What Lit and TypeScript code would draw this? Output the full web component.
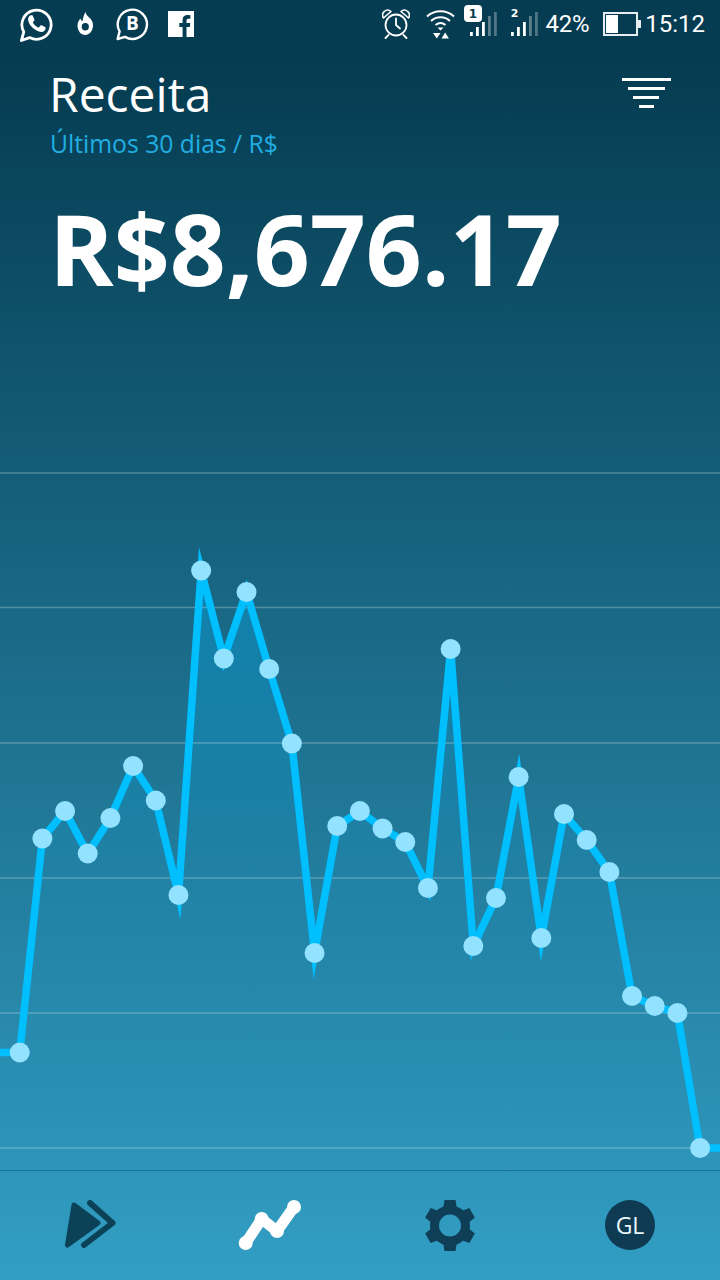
import { LitElement, html, css, svg } from 'lit';
import { customElement } from 'lit/decorators.js';

// chart y values are page coordinates, the svg has a matching viewBox
const VALUES = [
  1052.5, 838.5, 811, 853.5, 818, 766, 800.5, 895, 570.5, 658.5, 592, 669, 743.5, 953, 826, 811,
  828.5, 842, 888, 649, 946, 898, 777, 938, 814, 840, 872, 996, 1006, 1013, 1148,
];
const POINTS = VALUES.map((y, i): [number, number] => [19.7 + 22.68 * i, y]);
const GRID = [473, 607.5, 743, 878, 1013, 1148];

@customElement('app-root')
export class AppRoot extends LitElement {
  static styles = css`
    :host {
      display: block;
    }
    .page {
      width: 720px;
      height: 1280px;
      display: flex;
      flex-direction: column;
      background: linear-gradient(180deg, #053c51 0%, #053c51 5%, #329ec4 100%);
      color: #fff;
      font-family: 'Open Sans', sans-serif;
      overflow: hidden;
    }
    .status {
      height: 48px;
      flex: none;
      display: flex;
      align-items: center;
      justify-content: space-between;
      padding: 0 15px 0 20px;
      font-family: Roboto, sans-serif;
      font-size: 24px;
    }
    .left,
    .right {
      display: flex;
      align-items: center;
    }
    svg {
      display: block;
    }
    .flame { margin-left: 24px; }
    .biz { margin-left: 22px; }
    .fb { margin-left: 19px; }
    .wifi { margin-left: 16px; }
    .sim1 { margin-left: 9px; margin-top: -2px; }
    .sim2 { margin-left: 13px; margin-top: -2px; }
    .pct { margin-left: 7px; letter-spacing: -0.3px; }
    .batt { margin-left: 14px; }
    .time { margin-left: 4px; }
    .head {
      flex: none;
      height: 110px;
      display: flex;
      justify-content: space-between;
      padding: 15px 49px 0 50px;
      box-sizing: border-box;
    }
    h1 {
      margin: 0 0 0 -1px;
      font-size: 48px;
      line-height: 62px;
      font-weight: 400;
    }
    .sub {
      font-size: 24.7px;
      line-height: 34px;
      margin-top: 2px;
      color: #20aee2;
    }
    .filter {
      margin-top: 15px;
    }
    .amount {
      flex: none;
      height: 282px;
      padding-left: 49px;
      font-size: 98px;
      line-height: 180px;
      font-weight: 700;
    }
    .chart {
      flex: 1;
      min-height: 0;
    }
    nav {
      flex: none;
      height: 110px;
      border-top: 1px solid #1a7293;
      display: grid;
      grid-template-columns: repeat(4, 1fr);
      justify-items: center;
      padding-top: 29px;
      box-sizing: border-box;
    }
    .avatar {
      width: 50px;
      height: 50px;
      border-radius: 50%;
      background: #0e3b52;
      display: flex;
      align-items: center;
      justify-content: center;
      font-size: 23px;
      color: #e8f6fb;
    }
  `;

  private signal(cls: string, width: number, offset: number, badge: boolean) {
    const bars = [[0, 4, 1], [6, 9, 1], [12, 14, 1], [18, 20, 0.35], [24, 24, 0.3]];
    return html`<svg class=${cls} width=${width} height="36" viewBox="0 0 ${width} 36">
      ${badge
        ? svg`<rect x="0" y="0" width="18" height="17" rx="4" fill="#fff"/>
            <text x="9" y="13" text-anchor="middle" font-family="DejaVu Sans" font-weight="700" font-size="12" fill="#053c51">1</text>`
        : svg`<text x="4.5" y="12" text-anchor="middle" font-family="DejaVu Sans" font-weight="700" font-size="11" fill="#fff">2</text>`}
      ${bars.map(
        ([x, h, o]) => svg`<rect x=${x + offset} y=${31 - h} width="2.8" height=${h} fill="#fff" opacity=${o}/>`,
      )}
    </svg>`;
  }

  private renderStatus() {
    return html`<div class="status">
      <div class="left">
        <svg width="33" height="36" viewBox="0 0 33 36" fill="none" stroke="#fff" stroke-width="2.8">
          <path d="M1.4 34.5l2.4-8.6A14.6 14.6 0 1 1 9.6 31.6z" stroke-linejoin="round"/>
          <path fill="#fff" stroke="none" d="M11.6 9.2c.5 0 1 0 1.3.7l1.5 3.5c.2.4.1.8-.1 1.1l-1.2 1.5c-.3.3-.3.7 0 1.1 1.2 2 2.8 3.4 4.9 4.4.4.2.8.1 1-.2l1.5-1.8c.3-.4.7-.4 1.1-.2l3.4 1.6c.5.3.6.5.6 1 0 2.500-2.200 4.100-4.500 4-5.900-.6-12.400-6.400-13-12.200-.1-1.800.9-3.800 2.500-4.500.3 0 .6 0 1 0z"/>
        </svg>
        <svg class="flame" width="17" height="24" viewBox="0 0 17 24">
          <path fill="#fff" fill-rule="evenodd" d="M8.500 0c.6 2.500 1.700 3.600 3.200 5 2.300 2 4.300 4.300 4.300 8.300 0 5.400-3.500 9.700-7.800 9.700S.5 18.800.5 13.500C.5 10.500 2 8 3.500 6.500c.3 1.400 1 2.200 2 2.500C6 6 6.800 3 8.500 0zM8.300 11a3.600 3.700 0 1 0 0 7.400 3.600 3.700 0 0 0 0-7.400z"/>
        </svg>
        <svg class="biz" width="33" height="34" viewBox="0 0 33 34" fill="none" stroke="#fff" stroke-width="2.400">
          <path d="M1.600 32l2-7.600A14.600 14.600 0 1 1 9 29.900z" stroke-linejoin="round"/>
          <text x="16.500" y="23" text-anchor="middle" fill="#fff" stroke="none" font-family="Open Sans" font-weight="700" font-size="19">B</text>
        </svg>
        <svg class="fb" width="26" height="26" viewBox="0 0 26 26">
          <path fill="#fff" d="M0 0h26v26h-7.500v-10h3.300l.5-3.900h-3.800V9.700c0-1.100.3-1.900 1.900-1.900h2V4.300c-.4 0-1.600-.2-2.900-.2-2.900 0-4.900 1.800-4.900 5v3h-3.300V16h3.300v10H0z"/>
        </svg>
      </div>
      <div class="right">
        <svg width="28" height="30" viewBox="0 0 28 30" fill="none" stroke="#fff" stroke-width="1.800">
          <circle cx="14" cy="16" r="10.500"/>
          <path d="M14 9.500V16l4 3.500M6.500 26l-3 3M21.500 26l3 3" stroke-linecap="round"/>
          <path d="M1.500 9A5 5 0 0 1 9 2.500zM26.500 9A5 5 0 0 0 19 2.500z" stroke-width="1.600" stroke-linejoin="round"/>
        </svg>
        <svg class="wifi" width="29" height="30" viewBox="0 0 29 30" fill="none" stroke="#fff" stroke-width="2">
          <path d="M1 7.500C8.500 .5 20.500 .5 28 7.500M5 12c5.500-5 13.500-5 19 0M9.500 16c3-2.500 7-2.500 10 0"/>
          <path fill="#fff" stroke="none" d="M11.500 18.500h6l-3 3zM7 24h7.500l-3.700 5.500zM15.500 29.500l3.700-6 3.700 6z"/>
        </svg>
        ${this.signal('sim1', 33, 6, true)} ${this.signal('sim2', 29, 1, false)}
        <span class="pct">42%</span>
        <svg class="batt" width="38" height="24" viewBox="0 0 38 24">
          <rect x="1" y="1" width="33" height="22" fill="none" stroke="#e6eef1" stroke-width="2"/>
          <rect x="3" y="3" width="12" height="18" fill="#fff"/>
          <rect x="35" y="8" width="3" height="8" fill="#e6eef1"/>
        </svg>
        <span class="time">15:12</span>
      </div>
    </div>`;
  }

  private renderChart() {
    const line = POINTS.map(([x, y]) => `${x},${y}`).join(' ');
    const all = `0,1052.5 ${line} 720,1148`;
    return html`<svg class="chart" width="720" height="730" viewBox="0 440 720 730">
      <defs>
        <linearGradient id="area" gradientUnits="userSpaceOnUse" x1="0" y1="570" x2="0" y2="1150">
          <stop offset="0" stop-color="#05a8e6" stop-opacity="0.45"/>
          <stop offset="0.5" stop-color="#05a8e6" stop-opacity="0.1"/>
          <stop offset="1" stop-color="#05a8e6" stop-opacity="0"/>
        </linearGradient>
      </defs>
      <polygon points="0,1148 ${all} 720,1148" fill="url(#area)"/>
      ${GRID.map((y) => svg`<line x1="0" x2="720" y1=${y} y2=${y} stroke="#fff" stroke-opacity="0.25" stroke-width="1.500"/>`)}
      <polyline points=${all} fill="none" stroke="#00bfff" stroke-width="7.500" stroke-linejoin="miter" stroke-miterlimit="10"/>
      ${POINTS.map(([x, y]) => svg`<circle cx=${x} cy=${y} r="10" fill="#93e2ff"/>`)}
    </svg>`;
  }

  private renderGear() {
    const teeth = [0, 60, 120, 180, 240, 300];
    return html`<svg width="50" height="52" viewBox="0 0 50 52">
      <circle cx="25" cy="25.500" r="15.500" fill="none" stroke="#0e3f57" stroke-width="9"/>
      ${teeth.map(
        (a) => svg`<polygon points="19.500,0 30.500,0 32,9 18,9" fill="#0e3f57" transform="rotate(${a} 25 25.500)"/>`,
      )}
    </svg>`;
  }

  private renderNav() {
    return html`<nav>
      <svg width="54" height="52" viewBox="0 0 54 52">
        <path fill="#0c4258" stroke="#0c4258" stroke-width="5" stroke-linejoin="round" d="M11 5L35 23 4.500 45z"/>
        <path fill="none" stroke="#0c4258" stroke-width="6" stroke-linecap="round" stroke-linejoin="round" d="M27 3l22.500 20L21 45"/>
      </svg>
      <svg width="66" height="54" viewBox="0 0 66 54" fill="none">
        <path stroke="#fff" stroke-width="11" stroke-linecap="round" stroke-linejoin="round" d="M8.700 43L24.700 19 40 31 57 7"/>
        <g fill="#fff">
          <circle cx="8.700" cy="43" r="7"/><circle cx="24.700" cy="19" r="7"/><circle cx="40" cy="31" r="7"/><circle cx="57" cy="7" r="7"/>
        </g>
      </svg>
      ${this.renderGear()}
      <div class="avatar">GL</div>
    </nav>`;
  }

  render() {
    return html`<div class="page">
      ${this.renderStatus()}
      <div class="head">
        <div>
          <h1>Receita</h1>
          <div class="sub">Últimos 30 dias / R$</div>
        </div>
        <svg class="filter" width="49" height="30" viewBox="0 0 49 30" fill="#fff">
          <rect x="0" y="0" width="49" height="3"/>
          <rect x="6" y="9" width="37" height="3"/>
          <rect x="11" y="18" width="26" height="3"/>
          <rect x="17" y="27" width="15" height="3"/>
        </svg>
      </div>
      <div class="amount">R$8,676.17</div>
      ${this.renderChart()}
      ${this.renderNav()}
    </div>`;
  }
}
